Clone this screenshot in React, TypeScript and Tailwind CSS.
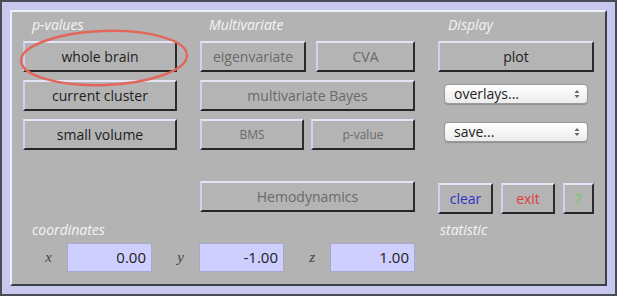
import React from 'react';

const sans = "font-['Open_Sans','DejaVu_Sans',sans-serif]";
const btn =
  'flex items-center justify-center h-[31px] bg-[#b4b4b4] border-2 border-t-[#e4e4f6] border-l-[#cfd2ee] border-b-[#262626] border-r-[#2c2c2c] text-[14px] leading-none';

const Label: React.FC<{ children: React.ReactNode; className?: string }> = ({ children, className }) => (
  <div className={`h-[16px] text-[14px] italic leading-[16px] text-[#f4f4f4] ${className ?? ''}`}>{children}</div>
);

const Select: React.FC<{ text: string; className?: string }> = ({ text, className }) => (
  <div
    className={`mx-[6px] flex h-[20px] items-center justify-between rounded-[4px] border border-[#9a9a9a] bg-gradient-to-b from-[#ffffff] to-[#ececec] pl-[9px] pr-[7px] text-[14px] leading-none text-[#222] shadow-[0_1px_1px_rgba(0,0,0,0.2)] ${className ?? ''}`}
  >
    <span>{text}</span>
    <svg width="6" height="10" viewBox="0 0 6 10">
      <path d="M0.5 4 L3 1 L5.5 4 Z M0.5 6 L3 9 L5.5 6 Z" fill="#666" />
    </svg>
  </div>
);

const Coord: React.FC<{ axis: string; value: string; labelW: string }> = ({ axis, value, labelW }) => (
  <>
    <span className={`${labelW} pr-[15px] text-right font-['Liberation_Serif',serif] text-[15px] italic text-[#444]`}>{axis}</span>
    <div className="flex h-[29px] w-[85px] items-center justify-end border border-[#a8a8c8] bg-[#ceceff] pr-[5px] text-[15px] text-[#222]">
      {value}
    </div>
  </>
);

export default function App() {
  return (
    <div className={`relative h-[296px] w-[617px] border-2 border-[#4c4c58] bg-[#c8c8ef] p-[8px] ${sans}`}>
      <div className="h-full border-2 border-t-[#eeeefa] border-l-[#eeeefa] border-b-[#3e3e4a] border-r-[#3e3e4a] bg-[#b3b3b3] px-[11px] pt-[5px]">
        <div className="grid grid-cols-[154px_215px_156px] gap-x-[23px]">
          <div className="flex flex-col">
            <Label className="pl-[9px]">p-values</Label>
            <div className={`${btn} mt-[8px] text-[#1e1e1e]`}>whole brain</div>
            <div className={`${btn} mt-[8px] text-[#1e1e1e]`}>current cluster</div>
            <div className={`${btn} mt-[8px] text-[#1e1e1e]`}>small volume</div>
          </div>
          <div className="flex flex-col">
            <Label className="pl-[9px]">Multivariate</Label>
            <div className="mt-[8px] flex gap-[10px]">
              <div className={`${btn} w-[106px] text-[#6a6a6a]`}>eigenvariate</div>
              <div className={`${btn} flex-1 text-[#6a6a6a]`}>CVA</div>
            </div>
            <div className={`${btn} mt-[8px] text-[#6a6a6a]`}>multivariate Bayes</div>
            <div className="mt-[8px] flex gap-[7px]">
              <div className={`${btn} w-[104px] !text-[12px] text-[#6a6a6a]`}>BMS</div>
              <div className={`${btn} flex-1 !text-[12px] text-[#6a6a6a]`}>p-value</div>
            </div>
            <div className={`${btn} mt-[31px] text-[#6a6a6a]`}>Hemodynamics</div>
          </div>
          <div className="flex flex-col">
            <Label className="pl-[10px]">Display</Label>
            <div className={`${btn} mt-[8px] border-t-[#b8c0ee] border-l-[#7c88c0] text-[#1e1e1e]`}>plot</div>
            <Select text="overlays..." className="mt-[12px]" />
            <Select text="save..." className="mt-[18px]" />
            <div className="mt-[41px] flex gap-[8px]">
              <div className={`${btn} h-[28px] w-[55px] border-t-[#d8d8f6] border-l-[#9aa2d8] text-[#3030c8]`}>clear</div>
              <div className={`${btn} h-[28px] w-[54px] text-[#e03c3c]`}>exit</div>
              <div className={`${btn} h-[28px] w-[31px] !text-[15px] text-[#66d060]`}>?</div>
            </div>
          </div>
        </div>
        <div className="mt-[8px] grid grid-cols-[154px_215px_156px] gap-x-[23px]">
          <Label className="pl-[9px]">coordinates</Label>
          <div />
          <Label className="pl-[2px]">statistic</Label>
        </div>
        <div className="mt-[5px] flex items-center">
          <Coord axis="x" value="0.00" labelW="w-[44px]" />
          <Coord axis="y" value="-1.00" labelW="w-[47px]" />
          <Coord axis="z" value="1.00" labelW="w-[46px]" />
        </div>
      </div>
      <svg className="pointer-events-none absolute left-0 top-0" width="617" height="296">
        <ellipse cx="102" cy="56" rx="83" ry="27" fill="none" stroke="#e2675a" strokeWidth="2.5" transform="rotate(-2 102 56)" />
      </svg>
    </div>
  );
}
